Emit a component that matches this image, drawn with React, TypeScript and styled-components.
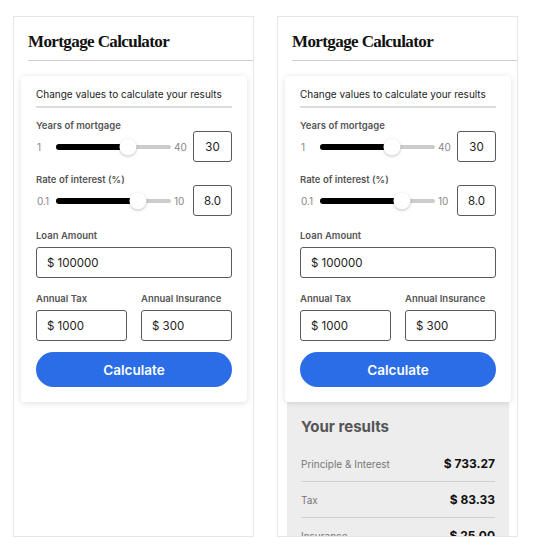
import React from 'react';
import styled, {createGlobalStyle} from 'styled-components';

const GlobalStyle = createGlobalStyle`
  html, body {
    margin: 0;
    padding: 0;
    background: #ffffff;
  }
  body {
    font-family: Inter, "Liberation Sans", sans-serif;
    -webkit-font-smoothing: antialiased;
  }
`

type SliderProps = {
    label: string
    min: string
    max: string
    value: string
    pct: number
}

type ResultRow = {
    name: string
    amount: string
}

const results: ResultRow[] = [
    {name: 'Principle & Interest', amount: '$ 733.27'},
    {name: 'Tax', amount: '$ 83.33'},
    {name: 'Insurance', amount: '$ 25.00'},
]

const SliderField = ({label, min, max, value, pct}: SliderProps) => {
    return (
        <Field>
            <Label>{label}</Label>
            <SliderRow>
                <RangeEnd>{min}</RangeEnd>
                <Track>
                    <Fill style={{width: `${pct}%`}}/>
                    <Thumb style={{left: `${pct}%`}}/>
                </Track>
                <RangeEnd right>{max}</RangeEnd>
                <ValueBox>{value}</ValueBox>
            </SliderRow>
        </Field>
    )
}

const Calculator = ({withResults}: { withResults?: boolean }) => {
    return (
        <Frame>
            <Header>
                <Title>Mortgage Calculator</Title>
            </Header>
            <Card>
                <Intro>Change values to calculate your results</Intro>
                <SliderField label='Years of mortgage' min='1' max='40' value='30' pct={62.6}/>
                <SliderField label='Rate of interest (%)' min='0.1' max='10' value='8.0' pct={71.3}/>
                <Field space={15}>
                    <Label>Loan Amount</Label>
                    <TextBox>$ 100000</TextBox>
                </Field>
                <Pair>
                    <Field space={16}>
                        <Label>Annual Tax</Label>
                        <TextBox>$ 1000</TextBox>
                    </Field>
                    <Field space={16}>
                        <Label>Annual Insurance</Label>
                        <TextBox>$ 300</TextBox>
                    </Field>
                </Pair>
                <CalcButton>Calculate</CalcButton>
            </Card>
            {withResults && (
                <Results>
                    <ResultsTitle>Your results</ResultsTitle>
                    {results.map(r => (
                        <Row key={r.name}>
                            <RowName>{r.name}</RowName>
                            <RowAmount>{r.amount}</RowAmount>
                        </Row>
                    ))}
                </Results>
            )}
        </Frame>
    )
}

export default function App() {
    return (
        <>
            <GlobalStyle/>
            <Page>
                <Calculator/>
                <Calculator withResults/>
            </Page>
        </>
    )
}

const Page = styled.main`
  display: flex;
  gap: 23px;
  padding: 16px 0 0 13px;
  height: 546px;
  box-sizing: border-box;
  overflow: hidden;
`

const Frame = styled.section`
  width: 241px;
  height: 521px;
  box-sizing: border-box;
  border: 1px solid #e6e6e6;
  overflow: hidden;
  display: flex;
  flex-direction: column;
  flex-shrink: 0;
`

const Header = styled.header`
  margin: 15px 0 0 14px;
  padding-bottom: 8px;
  border-bottom: 1px solid #cfcfcf;
`

const Title = styled.h1`
  margin: 0;
  font-family: "Liberation Serif", serif;
  font-weight: 700;
  font-size: 17px;
  line-height: 20px;
  letter-spacing: -0.6px;
  color: #111;
`

const Card = styled.div`
  position: relative;
  z-index: 1;
  margin: 15px 6px 0 7px;
  padding: 11px 15px 15px;
  background: #fff;
  border-radius: 4px;
  box-shadow: 0 1px 6px rgba(0, 0, 0, 0.13);
  display: flex;
  flex-direction: column;
`

const Intro = styled.p`
  margin: 0;
  padding-bottom: 5px;
  border-bottom: 2px solid #dcdcdc;
  font-size: 10px;
  line-height: 14px;
  color: #222;
`

const Field = styled.div<{ space?: number }>`
  display: flex;
  flex-direction: column;
  margin-top: ${p => p.space ?? 13}px;
  min-width: 0;
`

const Label = styled.label`
  font-size: 9.5px;
  line-height: 10px;
  font-weight: 600;
  color: #555;
  white-space: nowrap;
`

const SliderRow = styled.div`
  display: flex;
  align-items: center;
  height: 31px;
`

const RangeEnd = styled.span<{ right?: boolean }>`
  width: 19px;
  padding-left: ${p => p.right ? '3px' : '1px'};
  font-size: 10px;
  color: #888;
`

const Track = styled.div`
  position: relative;
  flex: 1;
  height: 4px;
  border-radius: 2px;
  background: #cccccc;
`

const Fill = styled.div`
  position: absolute;
  left: 0;
  top: -1px;
  height: 6px;
  border-radius: 3px;
  background: #000;
`

const Thumb = styled.div`
  position: absolute;
  top: 50%;
  width: 17px;
  height: 17px;
  border-radius: 50%;
  background: #fff;
  transform: translate(-50%, -50%);
  box-shadow: 0 1px 3px rgba(0, 0, 0, 0.25);
`

const ValueBox = styled.div`
  width: 39px;
  height: 31px;
  box-sizing: border-box;
  border: 1.5px solid #5a5a5a;
  border-radius: 3px;
  display: flex;
  align-items: center;
  justify-content: center;
  font-size: 11.5px;
  color: #222;
`

const TextBox = styled.div`
  margin-top: 6px;
  height: 31px;
  box-sizing: border-box;
  border: 1.5px solid #5a5a5a;
  border-radius: 3px;
  padding-left: 10px;
  display: flex;
  align-items: center;
  font-size: 11.5px;
  color: #222;
`

const Pair = styled.div`
  display: grid;
  grid-template-columns: 91px 91px;
  justify-content: space-between;
`

const CalcButton = styled.button`
  margin-top: 11px;
  height: 35px;
  border: none;
  border-radius: 18px;
  background: #2a6de6;
  color: #fff;
  font-family: Inter, "Liberation Sans", sans-serif;
  font-size: 13.5px;
  font-weight: 600;
  cursor: pointer;
`

const Results = styled.div`
  margin: -2px 8px 0 9px;
  padding: 17px 14px 0;
  background: #ededed;
  flex: 1;
`

const ResultsTitle = styled.h2`
  margin: 0 0 9px;
  font-size: 15px;
  line-height: 20px;
  font-weight: 700;
  color: #555;
`

const Row = styled.div`
  display: flex;
  justify-content: space-between;
  align-items: center;
  height: 35px;
  border-bottom: 1.5px solid #cfcfcf;
`

const RowName = styled.span`
  font-size: 10px;
  color: #777;
`

const RowAmount = styled.span`
  font-size: 12px;
  font-weight: 700;
  color: #111;
`
